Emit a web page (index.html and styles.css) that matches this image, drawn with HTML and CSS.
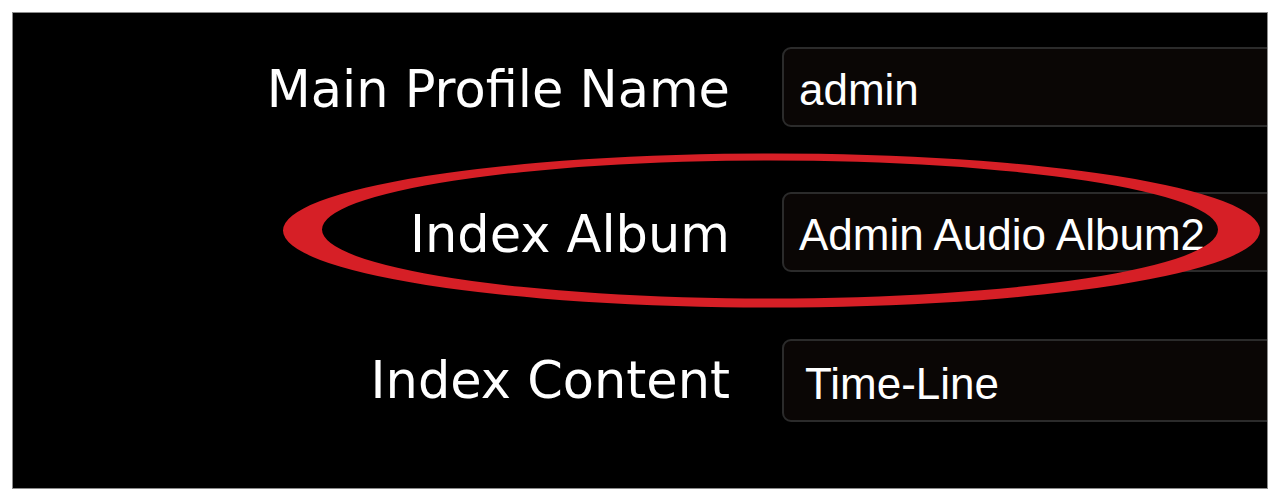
FILE: index.html
```html
<!DOCTYPE html>
<html lang="en">
<head>
<meta charset="utf-8">
<title>Profile Settings</title>
<link rel="stylesheet" href="styles.css">
</head>
<body>
<div class="panel">
  <form class="form">
    <div class="row">
      <label class="label">Main Profile Name</label>
      <div class="field"><span class="value">admin</span></div>
    </div>
    <div class="row">
      <label class="label">Index Album</label>
      <div class="field"><span class="value">Admin Audio Album2</span></div>
    </div>
    <div class="row row-last">
      <label class="label">Index Content</label>
      <div class="field"><span class="value value-t">Time-Line</span></div>
    </div>
  </form>
  <svg class="mark" viewBox="13 13 1254 475" width="1254" height="475" aria-hidden="true">
    <path fill="#d61f26" fill-rule="evenodd"
      d="M283 230.5a488.5 77 0 1 0 977 0a488.5 77 0 1 0 -977 0Z
         M322 229.5a448 69 0 1 0 896 0a448 69 0 1 0 -896 0Z"/>
  </svg>
</div>
</body>
</html>
```

FILE: styles.css
```css
html, body {
  margin: 0;
  padding: 0;
  background: #ffffff;
}

body {
  padding: 12px 0 0 12px;
}

.panel {
  position: relative;
  box-sizing: border-box;
  width: 1256px;
  height: 477px;
  background: #000000;
  border: 1px solid #8c8c8c;
  overflow: hidden;
}

.form {
  display: flex;
  flex-direction: column;
  gap: 65px;
  padding-top: 34px;
}

.row {
  display: grid;
  grid-template-columns: 717px 620px;
  column-gap: 52px;
  align-items: center;
}

.row-last {
  margin-top: 2px;
}

.label {
  font-family: "DejaVu Sans", Verdana, sans-serif;
  font-size: 51px;
  color: #ffffff;
  text-align: right;
  white-space: nowrap;
  margin-top: 4px;
}

.row-last .label {
  margin-top: 0;
}

.field {
  box-sizing: border-box;
  height: 80px;
  display: flex;
  align-items: center;
  padding: 6px 0 0 15px;
  background: #0a0605;
  border: 2px solid #2b2b2b;
  border-radius: 9px;
}

.row-last .field {
  height: 83px;
}

.value {
  font-family: "Liberation Sans", Arial, sans-serif;
  font-size: 44px;
  color: #ffffff;
  white-space: nowrap;
}

.value-t {
  padding-left: 6px;
}

.mark {
  position: absolute;
  left: 0;
  top: 0;
  pointer-events: none;
}
```
